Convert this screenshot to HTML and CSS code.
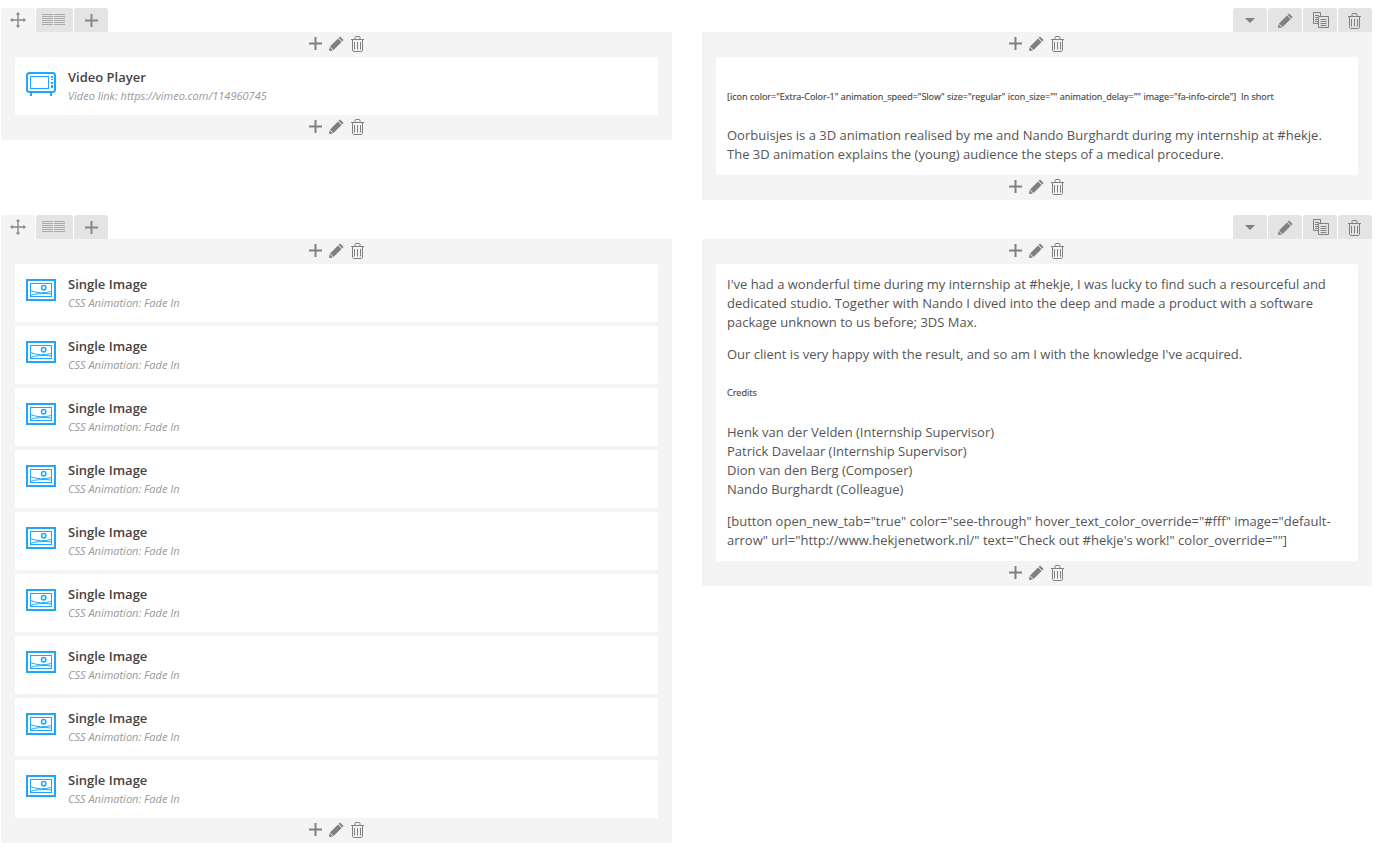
FILE: index.html
```html
<!DOCTYPE html>
<html lang="en">
<head>
<meta charset="utf-8">
<title>Page builder</title>
<link rel="stylesheet" href="styles.css">
</head>
<body>
<svg class="defs" width="0" height="0" aria-hidden="true">
  <defs>
    <symbol id="i-plus" viewBox="0 0 13 13"><path d="M5.500 0h2v5.500H13v2H7.500V13h-2V7.500H0v-2h5.500z" fill="currentColor"/></symbol>
    <symbol id="i-pencil" viewBox="0 0 15 15"><path d="M11 .4 14.600 4l-1.400 1.400-3.600-3.600zM9 2.400 12.600 6l-8 8-3.600-3.600zM.6 11 4 14.400 0 15z" fill="currentColor"/></symbol>
    <symbol id="i-trash" viewBox="0 0 13 16"><g fill="none" stroke="currentColor" stroke-width="1"><path d="M0 3.500h13M4 3.200V1.500c0-.6.4-1 1-1h3c.6 0 1 .4 1 1v1.700M1.500 3.500V14c0 .9.600 1.500 1.400 1.500h7.200c.8 0 1.400-.6 1.400-1.500V3.500"/><path d="M3.500 6v7.500M6.500 6v7.500M9.500 6v7.500"/></g></symbol>
    <symbol id="i-move" viewBox="0 0 16 16"><path d="M8 0l2.300 2.600H8.700v4.700h4.700V5.700L16 8l-2.600 2.300V8.700H8.700v4.700h1.600L8 16l-2.300-2.600h1.600V8.700H2.600v1.600L0 8l2.600-2.300v1.600h4.700V2.600H5.700z" fill="currentColor"/></symbol>
    <symbol id="i-columns" viewBox="0 0 23 11"><path d="M0 .5h11M12 .5h11M0 2.500h11M12 2.500h11M0 4.500h11M12 4.500h11M0 6.500h11M12 6.500h11M0 8.500h11M12 8.500h11M0 10.500h11M12 10.500h11" stroke="currentColor" stroke-width="1" fill="none"/></symbol>
    <symbol id="i-caret" viewBox="0 0 10 5"><path d="M0 0h10L5 5z" fill="currentColor"/></symbol>
    <symbol id="i-copy" viewBox="0 0 16 16"><g fill="none" stroke="currentColor" stroke-width="1"><path d="M.5 11.500V.500h7v3.500M.5 11.500h5"/><path d="M5.500 4.500h10v11h-10z"/><path d="M2 3.500h4M2 5.500h3M2 7.500h3M2 9.500h3M7.500 7.500h6M7.500 9.500h6M7.500 11.500h6M7.500 13.500h6"/></g></symbol>
    <symbol id="i-video" viewBox="0 0 30 24"><g fill="none" stroke="currentColor"><rect x="1" y="1" width="28" height="19" rx="2.500" stroke-width="2"/><rect x="4.500" y="4.500" width="18" height="12" stroke-width="1"/></g><path d="M25 4h2v2h-2zM25 7h2v1h-2zM25 10h2v2h-2zM25 13h2v3h-2zM4 21h2v3H4zM24 21h2v3h-2z" fill="currentColor"/></symbol>
    <symbol id="i-image" viewBox="0 0 30 22"><g fill="none" stroke="currentColor"><rect x="1" y="1" width="28" height="20" stroke-width="2"/><rect x="4.500" y="4.500" width="21" height="13" stroke-width="1"/><circle cx="17.700" cy="8.700" r="2.200" stroke-width="1.500"/><path d="M4.500 11.500Q14 15.500 25.500 12.500M4.500 16.500Q12 13.500 25.500 15" stroke-width="1"/></g></symbol>
  </defs>
</svg>

<main class="page">
  <section class="row row-first">
    <div class="column">
      <div class="tabs">
        <span class="tab tab-active tab-move"><svg class="ico ico-move"><use href="#i-move"/></svg></span>
        <span class="tab tab-cols"><svg class="ico ico-cols"><use href="#i-columns"/></svg></span>
        <span class="tab tab-add"><svg class="ico ico-plus-lg"><use href="#i-plus"/></svg></span>
      </div>
      <div class="block">
        <div class="controls"><svg class="ico ico-plus"><use href="#i-plus"/></svg><svg class="ico ico-pencil"><use href="#i-pencil"/></svg><svg class="ico ico-trash"><use href="#i-trash"/></svg></div>
        <div class="card item">
          <svg class="item-icon video"><use href="#i-video"/></svg>
          <div><div class="item-title">Video Player</div><div class="item-sub">Video link: https://vimeo.com/114960745</div></div>
        </div>
        <div class="controls"><svg class="ico ico-plus"><use href="#i-plus"/></svg><svg class="ico ico-pencil"><use href="#i-pencil"/></svg><svg class="ico ico-trash"><use href="#i-trash"/></svg></div>
      </div>
    </div>
    <div class="column column-right">
      <div class="tabs tabs-right">
        <span class="tab tab-tool"><svg class="ico ico-caret"><use href="#i-caret"/></svg></span>
        <span class="tab tab-tool"><svg class="ico ico-pencil-lg"><use href="#i-pencil"/></svg></span>
        <span class="tab tab-tool"><svg class="ico ico-copy"><use href="#i-copy"/></svg></span>
        <span class="tab tab-tool"><svg class="ico ico-trash-lg"><use href="#i-trash"/></svg></span>
      </div>
      <div class="block">
        <div class="controls"><svg class="ico ico-plus"><use href="#i-plus"/></svg><svg class="ico ico-pencil"><use href="#i-pencil"/></svg><svg class="ico ico-trash"><use href="#i-trash"/></svg></div>
        <div class="card text text-first">
          <h6 class="small-head small-head-first">[icon color="Extra-Color-1" animation_speed="Slow" size="regular" icon_size="" animation_delay="" image="fa-info-circle"]&nbsp; In short</h6>
          <p>Oorbuisjes is a 3D animation realised by me and Nando Burghardt during my internship at #hekje.<br>The 3D animation explains the (young) audience the steps of a medical procedure.</p>
        </div>
        <div class="controls"><svg class="ico ico-plus"><use href="#i-plus"/></svg><svg class="ico ico-pencil"><use href="#i-pencil"/></svg><svg class="ico ico-trash"><use href="#i-trash"/></svg></div>
      </div>
    </div>
  </section>

  <section class="row">
    <div class="column">
      <div class="tabs">
        <span class="tab tab-active tab-move"><svg class="ico ico-move"><use href="#i-move"/></svg></span>
        <span class="tab tab-cols"><svg class="ico ico-cols"><use href="#i-columns"/></svg></span>
        <span class="tab tab-add"><svg class="ico ico-plus-lg"><use href="#i-plus"/></svg></span>
      </div>
      <div class="block">
        <div class="controls"><svg class="ico ico-plus"><use href="#i-plus"/></svg><svg class="ico ico-pencil"><use href="#i-pencil"/></svg><svg class="ico ico-trash"><use href="#i-trash"/></svg></div>
        <div class="stack">
          <div class="card item"><svg class="item-icon image"><use href="#i-image"/></svg><div><div class="item-title">Single Image</div><div class="item-sub">CSS Animation: Fade In</div></div></div>
          <div class="card item"><svg class="item-icon image"><use href="#i-image"/></svg><div><div class="item-title">Single Image</div><div class="item-sub">CSS Animation: Fade In</div></div></div>
          <div class="card item"><svg class="item-icon image"><use href="#i-image"/></svg><div><div class="item-title">Single Image</div><div class="item-sub">CSS Animation: Fade In</div></div></div>
          <div class="card item"><svg class="item-icon image"><use href="#i-image"/></svg><div><div class="item-title">Single Image</div><div class="item-sub">CSS Animation: Fade In</div></div></div>
          <div class="card item"><svg class="item-icon image"><use href="#i-image"/></svg><div><div class="item-title">Single Image</div><div class="item-sub">CSS Animation: Fade In</div></div></div>
          <div class="card item"><svg class="item-icon image"><use href="#i-image"/></svg><div><div class="item-title">Single Image</div><div class="item-sub">CSS Animation: Fade In</div></div></div>
          <div class="card item"><svg class="item-icon image"><use href="#i-image"/></svg><div><div class="item-title">Single Image</div><div class="item-sub">CSS Animation: Fade In</div></div></div>
          <div class="card item"><svg class="item-icon image"><use href="#i-image"/></svg><div><div class="item-title">Single Image</div><div class="item-sub">CSS Animation: Fade In</div></div></div>
          <div class="card item"><svg class="item-icon image"><use href="#i-image"/></svg><div><div class="item-title">Single Image</div><div class="item-sub">CSS Animation: Fade In</div></div></div>
        </div>
        <div class="controls"><svg class="ico ico-plus"><use href="#i-plus"/></svg><svg class="ico ico-pencil"><use href="#i-pencil"/></svg><svg class="ico ico-trash"><use href="#i-trash"/></svg></div>
      </div>
    </div>
    <div class="column column-right">
      <div class="tabs tabs-right">
        <span class="tab tab-tool"><svg class="ico ico-caret"><use href="#i-caret"/></svg></span>
        <span class="tab tab-tool"><svg class="ico ico-pencil-lg"><use href="#i-pencil"/></svg></span>
        <span class="tab tab-tool"><svg class="ico ico-copy"><use href="#i-copy"/></svg></span>
        <span class="tab tab-tool"><svg class="ico ico-trash-lg"><use href="#i-trash"/></svg></span>
      </div>
      <div class="block">
        <div class="controls"><svg class="ico ico-plus"><use href="#i-plus"/></svg><svg class="ico ico-pencil"><use href="#i-pencil"/></svg><svg class="ico ico-trash"><use href="#i-trash"/></svg></div>
        <div class="card text">
          <p>I've had a wonderful time during my internship at #hekje, I was lucky to find such a resourceful and dedicated studio. Together with Nando I dived into the deep and made a product with a software package unknown to us before; 3DS Max.</p>
          <p>Our client is very happy with the result, and so am I with the knowledge I've acquired.</p>
          <h6 class="small-head">Credits</h6>
          <p>Henk van der Velden (Internship Supervisor)<br>Patrick Davelaar (Internship Supervisor)<br>Dion van den Berg (Composer)<br>Nando Burghardt (Colleague)</p>
          <p>[button open_new_tab="true" color="see-through" hover_text_color_override="#fff" image="default-arrow" url="http://www.hekjenetwork.nl/" text="Check out #hekje's work!" color_override=""]</p>
        </div>
        <div class="controls"><svg class="ico ico-plus"><use href="#i-plus"/></svg><svg class="ico ico-pencil"><use href="#i-pencil"/></svg><svg class="ico ico-trash"><use href="#i-trash"/></svg></div>
      </div>
    </div>
  </section>
</main>
</body>
</html>
```

FILE: styles.css
```css
* { box-sizing: border-box; }
html, body { margin: 0; padding: 0; background: #fff; }
body { font-family: "Open Sans", "Liberation Sans", sans-serif; font-size: 13px; line-height: 19px; color: #555; overflow: hidden; }
.defs { position: absolute; }
.page { padding: 8px 13px 0 1px; }
.row { display: grid; grid-template-columns: 671px 670px; column-gap: 30px; align-items: start; }
.row-first { margin-bottom: 15px; }
.tabs { display: flex; height: 24px; gap: 1px; }
.tabs-right { justify-content: flex-end; }
.tab { display: flex; align-items: center; justify-content: center; height: 24px; background: #e4e4e4; border-radius: 3px 3px 0 0; color: #888; }
.tab-active { background: #f4f4f4; }
.tab-move { width: 34px; }
.tab-cols { width: 37px; padding: 0 2px 0 0; }
.tab-add { width: 34px; }
.tab-tool { width: 34px; color: #808080; }
.block { background: #f4f4f4; padding: 0 14px; }
.controls { display: flex; align-items: center; justify-content: center; gap: 7px; height: 25px; padding-bottom: 2px; color: #808080; }
.column-right .controls { padding-right: 1px; }
.ico { display: block; flex: none; }
.ico-plus { width: 13px; height: 13px; }
.ico-pencil { width: 15px; height: 15px; }
.ico-trash { width: 13px; height: 16px; margin-top: 1px; }
.ico-move { width: 16px; height: 16px; }
.ico-cols { width: 23px; height: 11px; margin-bottom: 1px; color: #aaa; }
.ico-plus-lg { width: 13px; height: 13px; margin: 1px 0 0 1px; }
.ico-caret { width: 10px; height: 5px; margin-top: 1px; }
.ico-pencil-lg { width: 15px; height: 15px; margin: 1px 0 0 1px; }
.ico-copy { width: 16px; height: 16px; margin-left: 2px; }
.ico-trash-lg { width: 13px; height: 16px; margin: 2px 1px 0 0; }
.card { background: #fff; border-radius: 2px; }
.item { display: flex; align-items: flex-start; height: 58px; padding: 11px 11px 0; }
.stack { display: flex; flex-direction: column; gap: 4px; }
.item-icon { flex: none; width: 30px; margin: 4px 12px 0 0; color: #1ea7fd; }
.item-icon.video { height: 24px; }
.item-icon.image { height: 22px; }
.item-title { font-size: 13px; font-weight: 600; line-height: 19px; color: #444; }
.item-sub { font-size: 11px; font-style: italic; line-height: 19px; margin-top: -1px; color: #999; }
.text { padding: 11px; }
.text p { margin: 0 0 13px; }
.text p:last-child { margin-bottom: 0; }
.small-head { margin: 0; font-size: 9px; font-weight: 400; line-height: 19px; color: #444; -webkit-text-stroke: .15px #444; }
.text .small-head { margin: 19px 0 21px; }
.text-first { padding-top: 30px; }
.text .small-head-first { margin: 0 0 20px; word-spacing: .12px; }
```
